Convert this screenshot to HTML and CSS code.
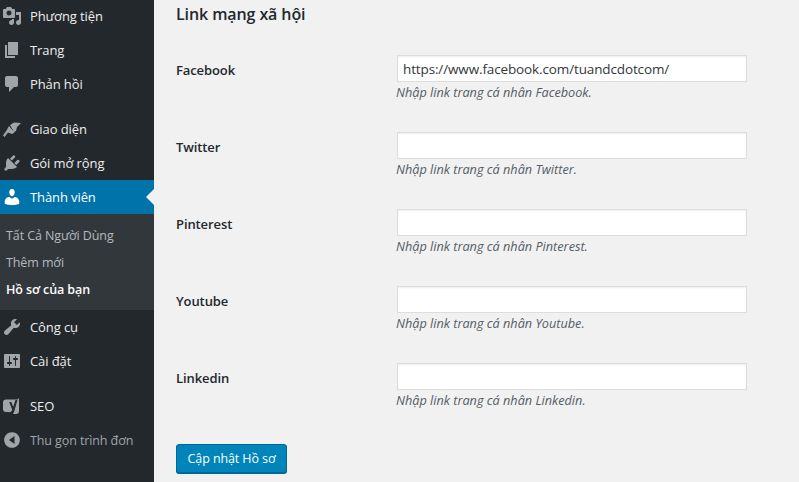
FILE: index.html
```html
<!DOCTYPE html>
<html lang="vi">
<head>
<meta charset="utf-8">
<title>Link mạng xã hội</title>
<link rel="stylesheet" href="styles.css">
</head>
<body>
<div class="page">
  <nav class="sidebar">
    <ul class="menu menu-top">
      <li class="item"><svg class="icon" viewBox="0 0 20 20"><path d="M13 11V4c0-.55-.45-1-1-1h-1.670L9 1H5L3.670 3H2c-.55 0-1 .45-1 1v7c0 .55.45 1 1 1h10c.55 0 1-.45 1-1zM7 4.500c1.380 0 2.500 1.120 2.500 2.500S8.380 9.500 7 9.500 4.500 8.380 4.500 7 5.620 4.500 7 4.500zM14 6h5v10.500c0 1.380-1.120 2.500-2.500 2.500S14 17.880 14 16.500s1.120-2.500 2.500-2.500c.17 0 .34.020.5.050V9h-3V6zm-4 8.050V13h2v3.500c0 1.380-1.120 2.500-2.500 2.500S7 17.880 7 16.500 8.120 14 9.500 14c.17 0 .34.020.5.050z" fill-rule="evenodd"/></svg><span>Phương tiện</span></li>
      <li class="item"><svg class="icon" viewBox="0 0 20 20"><path d="M6 15V2h10v13H6zm-1 1h8v2H3V5h2v11z"/></svg><span>Trang</span></li>
      <li class="item"><svg class="icon" viewBox="0 0 20 20"><path d="M5 2h9c1.100 0 2 .9 2 2v7c0 1.100-.9 2-2 2h-2l-5 5v-5H5c-1.100 0-2-.9-2-2V4c0-1.100.9-2 2-2z"/></svg><span>Phản hồi</span></li>
    </ul>
    <ul class="menu menu-group">
      <li class="item"><svg class="icon" viewBox="0 0 20 20"><path d="M8 6l4-2.500L19 4l-4 4-1 4-2 1zM7 7l5.500 6.500L10 15l-4-1.500L2.500 18 1 16.500l3.500-5z"/></svg><span>Giao diện</span></li>
      <li class="item"><svg class="icon" viewBox="0 0 20 20"><path d="M13.110 4.360L9.870 7.600 8 5.730l3.240-3.240c.35-.34 1.050-.2 1.560.320.52.510.66 1.210.31 1.550zm-8 1.770l.91-1.120 9.010 9.010-1.190.84c-.71.710-2.630 1.160-3.820 1.160H6.140L4.900 17.260c-.59.590-1.540.590-2.120 0-.59-.58-.59-1.530 0-2.120l1.240-1.240v-3.880c0-1.130.4-3.100 1.090-3.890zm7.260 3.970l3.240-3.240c.34-.35 1.040-.21 1.550.31.520.510.66 1.210.31 1.550l-3.240 3.250z"/></svg><span>Gói mở rộng</span></li>
      <li class="item item-current"><svg class="icon" viewBox="0 0 20 20"><path d="M10 9.250c-2.270 0-2.730-3.440-2.730-3.440C7 4.020 7.820 2 9.970 2c2.160 0 2.980 2.020 2.710 3.810 0 0-.41 3.440-2.680 3.440zm0 2.570L12.720 10c2.390 0 4.520 2.330 4.520 4.530v2.490s-3.650 1.130-7.240 1.130c-3.650 0-7.240-1.130-7.240-1.130v-2.490c0-2.250 1.940-4.480 4.470-4.480z"/></svg><span>Thành viên</span></li>
      <li>
        <ul class="submenu">
          <li class="subitem">Tất Cả Người Dùng</li>
          <li class="subitem">Thêm mới</li>
          <li class="subitem subitem-current">Hồ sơ của bạn</li>
        </ul>
      </li>
      <li class="item"><svg class="icon" viewBox="0 0 20 20"><path d="M16.680 9.770c-1.340 1.340-3.300 1.670-4.950.99l-5.410 6.520c-.99.990-2.590.99-3.580 0s-.99-2.590 0-3.570l6.520-5.420c-.68-1.650-.35-3.610.99-4.950 1.280-1.280 3.120-1.620 4.720-1.060l-2.890 2.890 2.820 2.820 2.860-2.860c.53 1.580.18 3.400-1.080 4.640z"/></svg><span>Công cụ</span></li>
      <li class="item"><svg class="icon" viewBox="0 0 20 20"><path fill-rule="evenodd" d="M18 16V4c0-.55-.45-1-1-1H3c-.55 0-1 .45-1 1v12c0 .55.45 1 1 1h14c.55 0 1-.45 1-1zM8 11h1c.55 0 1 .45 1 1s-.45 1-1 1H8v1.500c0 .28-.22.5-.5.500s-.5-.22-.5-.5V13H6c-.55 0-1-.45-1-1s.45-1 1-1h1V5.500c0-.28.22-.5.500-.5s.5.220.5.500V11zm5-2h-1c-.55 0-1-.45-1-1s.45-1 1-1h1V5.500c0-.28.22-.5.500-.5s.5.220.5.500V7h1c.55 0 1 .45 1 1s-.45 1-1 1h-1v5.500c0 .28-.22.5-.5.500s-.5-.22-.5-.5V9z"/></svg><span>Cài đặt</span></li>
    </ul>
    <ul class="menu menu-group">
      <li class="item"><svg class="icon" viewBox="0 0 20 20"><path fill-rule="evenodd" d="M4 3.500h11.500L17 2v13a3 3 0 0 1-3 3h-3l1-2L15.500 4h-2l-2.300 7-1.900-5H7.200l3 7.800c-.3 1.300-1.300 2.300-3.200 2.700V16H4a3 3 0 0 1-3-3V6.500a3 3 0 0 1 3-3z"/></svg><span>SEO</span></li>
      <li class="item item-collapse"><svg class="icon" viewBox="0 0 20 20"><path fill-rule="evenodd" d="M10 2.160c4.330 0 7.840 3.510 7.840 7.840s-3.510 7.840-7.840 7.840S2.160 14.330 2.160 10 5.670 2.160 10 2.160zM12.500 6L7 10l5.500 4z"/></svg><span>Thu gọn trình đơn</span></li>
    </ul>
  </nav>
  <main class="content">
    <h2 class="heading">Link mạng xã hội</h2>
    <div class="form">
      <label class="label">Facebook</label>
      <div class="field"><input class="input" type="text" value="https://www.facebook.com/tuandcdotcom/"><p class="desc">Nhập link trang cá nhân Facebook.</p></div>
      <label class="label">Twitter</label>
      <div class="field"><input class="input" type="text"><p class="desc">Nhập link trang cá nhân Twitter.</p></div>
      <label class="label">Pinterest</label>
      <div class="field"><input class="input" type="text"><p class="desc">Nhập link trang cá nhân Pinterest.</p></div>
      <label class="label">Youtube</label>
      <div class="field"><input class="input" type="text"><p class="desc">Nhập link trang cá nhân Youtube.</p></div>
      <label class="label">Linkedin</label>
      <div class="field"><input class="input" type="text"><p class="desc">Nhập link trang cá nhân Linkedin.</p></div>
    </div>
    <button class="button" type="button">Cập nhật Hồ sơ</button>
  </main>
</div>
</body>
</html>
```
FILE: styles.css
```css
* { box-sizing: border-box; }
html, body { margin: 0; height: 100%; overflow: hidden; }
body { background: #f1f1f1; font-family: "Open Sans", "Noto Sans", sans-serif; color: #23282d; }
.page { display: flex; height: 482px; }
.sidebar { width: 154px; flex: none; background: #23282d; }
.menu, .submenu { list-style: none; margin: 0; padding: 0; }
.menu-top { margin-top: -1px; }
.menu-group { margin-top: 11px; }
.item { position: relative; display: flex; align-items: center; height: 34px; padding-left: 2px; color: #eee; font-size: 13px; letter-spacing: -0.1px; }
.icon { width: 20px; height: 20px; margin-right: 8px; fill: #a0a5aa; flex: none; }
.item-current { background: #0073aa; color: #fff; }
.item-current .icon { fill: #fff; }
.item-current::after { content: ""; position: absolute; right: 0; top: 50%; margin-top: -8px; border: 8px solid transparent; border-right-color: #f1f1f1; border-left-width: 0; }
.item-collapse { color: #a0a5aa; font-size: 12.500px; }
.submenu { background: #32373c; padding: 8px 0 7px; }
.subitem { height: 27px; line-height: 27px; padding-left: 6px; font-size: 12.500px; letter-spacing: -0.1px; color: #b4b9be; }
.subitem-current { color: #fff; font-weight: 600; }
.content { flex: 1; padding: 0 0 0 22px; }
.heading { margin: 3px 0 30px; font-size: 16px; line-height: 22px; font-weight: 600; letter-spacing: -0.1px; color: #23282d; }
.form { display: grid; grid-template-columns: 221px 350px; grid-auto-rows: 77px; }
.label { padding-top: 6px; font-size: 13px; line-height: 18px; font-weight: 600; letter-spacing: -0.1px; color: #23282d; }
.field { min-width: 0; }
.input { display: block; width: 350px; height: 27px; padding: 0 5px; border: 1px solid #ddd; background: #fff; box-shadow: inset 0 1px 2px rgba(0,0,0,.07); font: 13.500px/25px "Open Sans", "Noto Sans", sans-serif; letter-spacing: -0.13px; color: #32373c; outline: 0; }
.desc { margin: 1px 0 0 -1px; font-size: 12.700px; line-height: 18px; font-style: italic; color: #555d66; }
.button { display: block; width: 111px; height: 29px; margin-top: 4px; padding: 0; border: 1px solid #006799; border-radius: 3px; background: #0085ba; box-shadow: 0 1px 0 #006799; color: #fff; font: 12.500px/27px "Open Sans", "Noto Sans", sans-serif; letter-spacing: -0.1px; }
```
